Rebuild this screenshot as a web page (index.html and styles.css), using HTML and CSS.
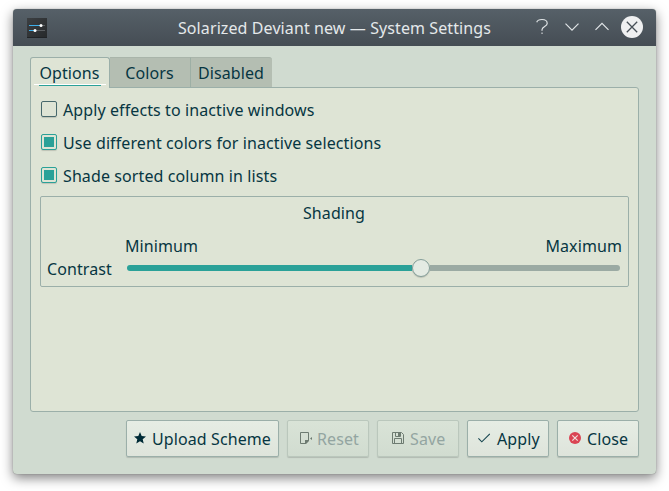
FILE: index.html
```html
<!DOCTYPE html>
<html lang="en">
<head>
<meta charset="utf-8">
<title>System Settings</title>
<link rel="stylesheet" href="styles.css">
</head>
<body>
<main class="window">
  <header class="titlebar">
    <svg class="app-icon" width="20" height="20" viewBox="0 0 20 20">
      <defs><linearGradient id="app" x1="0" y1="0" x2="1" y2="1"><stop offset="0" stop-color="#3c3f42"/><stop offset="1" stop-color="#26292b"/></linearGradient></defs>
      <path fill="url(#app)" d="M0 0h20v20H0z"/>
      <path fill="#202326" d="M0 19h20v1H0z"/>
      <path fill="#5c6063" d="M14 7h4v1h-4zM8 12h10v1H8z"/>
      <path fill="#3daee9" d="M2 7h12v1H2zM2 12h6v1H2z"/>
      <circle cx="14" cy="7.5" r="1.5" fill="#fff"/><circle cx="8" cy="12.5" r="1.5" fill="#fff"/>
    </svg>
    <h1 class="title">Solarized Deviant new — System Settings</h1>
    <div class="window-controls">
      <svg width="22" height="22" viewBox="0 0 22 22"><path class="stroke" d="M5.700 6.200C6.500 4.200 8.800 3.500 11 3.500c3 0 5.200 1.500 5.200 3.900 0 3.100-5.200 3.100-5.200 6.300v1"/><path fill="#b5babd" d="M10.300 16.500h1.500v1.500h-1.500z"/></svg>
      <svg width="22" height="22" viewBox="0 0 22 22"><path class="stroke" d="M4.500 7.700l6.500 6.500 6.500-6.500"/></svg>
      <svg width="22" height="22" viewBox="0 0 22 22"><path class="stroke" d="M4.500 13.800l6.500-6.500 6.500 6.500"/></svg>
      <svg width="22" height="22" viewBox="0 0 22 22"><circle cx="11" cy="11" r="11" fill="#eff0f1"/><path d="M5.800 5.800l10.400 10.400M16.200 5.800L5.800 16.200" stroke="#475057" stroke-width="1.300" fill="none"/></svg>
    </div>
  </header>
  <div class="content">
    <nav class="tabs">
      <button class="tab tab-active">Options</button>
      <button class="tab tab-colors">Colors</button>
      <button class="tab tab-disabled">Disabled</button>
    </nav>
    <section class="panel">
      <label class="option"><span class="box"></span>Apply effects to inactive windows</label>
      <label class="option"><span class="box checked"></span>Use different colors for inactive selections</label>
      <label class="option"><span class="box checked"></span>Shade sorted column in lists</label>
      <div class="group">
        <h2 class="group-title">Shading</h2>
        <div class="range-labels"><span>Minimum</span><span>Maximum</span></div>
        <div class="contrast">
          <span class="contrast-label">Contrast</span>
          <div class="slider"><div class="fill"></div><div class="handle"></div><div class="rest"></div></div>
        </div>
      </div>
    </section>
    <footer class="actions">
      <button class="button upload"><svg width="12" height="12" viewBox="0 0 12 12"><path fill="#002b36" d="M6 0l1.700 4.100 4.300.3-3.300 2.800 1 4.300L6 9.200l-3.700 2.300 1-4.300L0 4.400l4.300-.3z"/></svg>Upload Scheme</button>
      <button class="button reset" disabled><svg width="13" height="12" viewBox="0 0 13 12"><path fill="none" stroke="#6d7b71" d="M5.500 11.500h-5v-11h8v7.500"/><path fill="#6d7b71" d="M5 8h4v1L6 12H5zM10 6.500L12 5v3z"/></svg>Reset</button>
      <button class="button save" disabled><svg width="12" height="12" viewBox="0 0 12 12"><path fill="none" stroke="#6d7b71" d="M.5.500h9l2 2v9H.5zM2.500 11V6.500h7V11M3.500.5v4h5v-4"/><path fill="#6d7b71" d="M6 0h2v4H6z"/></svg>Save</button>
      <button class="button apply"><svg width="12" height="12" viewBox="0 0 12 12"><path fill="none" stroke="#174650" stroke-width="1.100" d="M.4 6.400l3.400 3.400 8-8"/></svg>Apply</button>
      <button class="button close"><svg width="12" height="12" viewBox="0 0 12 12"><circle cx="6" cy="6" r="6" fill="#da4453"/><path stroke="#f0dedb" stroke-width="1.200" d="M3.300 3.300l5.400 5.400M8.700 3.300L3.300 8.700"/></svg>Close</button>
    </footer>
  </div>
</main>
</body>
</html>
```
FILE: styles.css
```css
* { box-sizing: border-box; }
body {
  margin: 0;
  padding: 9px 13px 17px;
  height: 491px;
  overflow: hidden;
  background: #fff;
  color: #073642;
  font: 16px/22px "Noto Sans", sans-serif;
  letter-spacing: .1px;
}
svg { display: block; flex: none; }
.window {
  width: 643px;
  height: 465px;
  border-radius: 4px;
  overflow: hidden;
  background: #d0dbd0;
  box-shadow: 0 0 1px rgba(0,0,0,.45), 0 4px 12px rgba(0,0,0,.5);
}
.titlebar {
  display: flex;
  align-items: center;
  height: 37px;
  padding: 0 13px 0 14px;
  background: linear-gradient(#566068, #454d54);
  color: #e4e8ea;
}
.title {
  flex: 1;
  margin: 0;
  padding-left: 91px;
  font-size: 16px;
  font-weight: 400;
  text-align: center;
  white-space: nowrap;
}
.window-controls { display: flex; gap: 8px; margin-bottom: 1px; }
.stroke { fill: none; stroke: #e1e5e7; stroke-width: 1.200; }
.content { padding: 11px 17px 0; }
.tabs { display: flex; height: 30px; }
.tab {
  border: 0;
  border-top: 1px solid #a9b5aa;
  border-right: 1px solid #9dafa5;
  background: #b4beb2;
  color: inherit;
  font: inherit;
  letter-spacing: inherit;
  padding: 1px 1px 0 0;
}
.tab-active {
  width: 80px;
  height: 31px;
  z-index: 1;
  padding-bottom: 2px;
  border: 1px solid #9bafa9;
  border-bottom: 0;
  border-radius: 3px 3px 0 0;
  background:
    linear-gradient(#2aa198, #2aa198) 8px 27px / 62px 1px no-repeat,
    linear-gradient(#fff, #fff) 3px 26px / 72px 1px no-repeat,
    #dee4d5;
}
.tab-colors { width: 81px; }
.tab-disabled { width: 81px; border-right: 0; border-radius: 0 3px 0 0; }
.panel {
  height: 325px;
  padding: 11px 9px;
  border: 1px solid #9bafa9;
  border-radius: 0 3px 3px 3px;
  background: #dee4d5;
}
.option { display: flex; align-items: center; height: 22px; margin-bottom: 11px; }
.box {
  width: 16px;
  height: 16px;
  margin: 0 6px 2px 1px;
  border: 1px solid #47686c;
  border-radius: 2px;
  box-shadow: 0 1px 1px rgba(0,0,0,.15);
}
.checked { border-color: #2aa198; padding: 2px; background: #2aa198 content-box; }
.group {
  height: 91px;
  margin-top: -2px;
  padding: 5px 6px;
  border: 1px solid #9bafa9;
  border-radius: 2px;
}
.group-title { margin: 0 0 11px; padding-right: 1px; font-size: 16px; font-weight: 400; text-align: center; }
.range-labels { display: flex; justify-content: space-between; padding-left: 78px; }
.contrast { display: flex; height: 22px; align-items: center; margin-top: 1px; }
.contrast-label { width: 80px; }
.slider { display: flex; align-items: center; width: 493px; margin-bottom: 2px; }
.fill { width: 285px; height: 6px; border-radius: 3px 0 0 3px; background: #2aa198; }
.rest { flex: 1; height: 6px; border-radius: 0 3px 3px 0; background: #9baaa3; }
.handle {
  width: 18px;
  height: 18px;
  border: 1px solid #849e99;
  border-radius: 50%;
  background: #e4ebe3;
  box-shadow: 0 1px 1px rgba(0,0,0,.15);
}
.actions { display: flex; justify-content: space-between; margin-top: 8px; }
.button {
  display: flex;
  align-items: center;
  width: 82px;
  height: 37px;
  padding: 1px 0 0 11px;
  gap: 6px;
  border: 1px solid #9bafa9;
  border-radius: 2px;
  background: linear-gradient(#e6ede4, #dee4db);
  box-shadow: 0 1px 1px rgba(0,0,0,.15);
  color: inherit;
  font: inherit;
  letter-spacing: inherit;
  white-space: nowrap;
}
.button svg { margin-bottom: 2px; }
.upload { width: 153px; margin-left: 96px; padding-left: 7px; }
.reset { gap: 4px; padding-left: 12px; }
.save { padding-left: 14px; }
.apply { padding-left: 10px; gap: 7px; }
.button:disabled {
  border-color: #bac7bc;
  background: linear-gradient(#d9e3d7, #d1dcd0);
  color: #93a5a1;
}
```
